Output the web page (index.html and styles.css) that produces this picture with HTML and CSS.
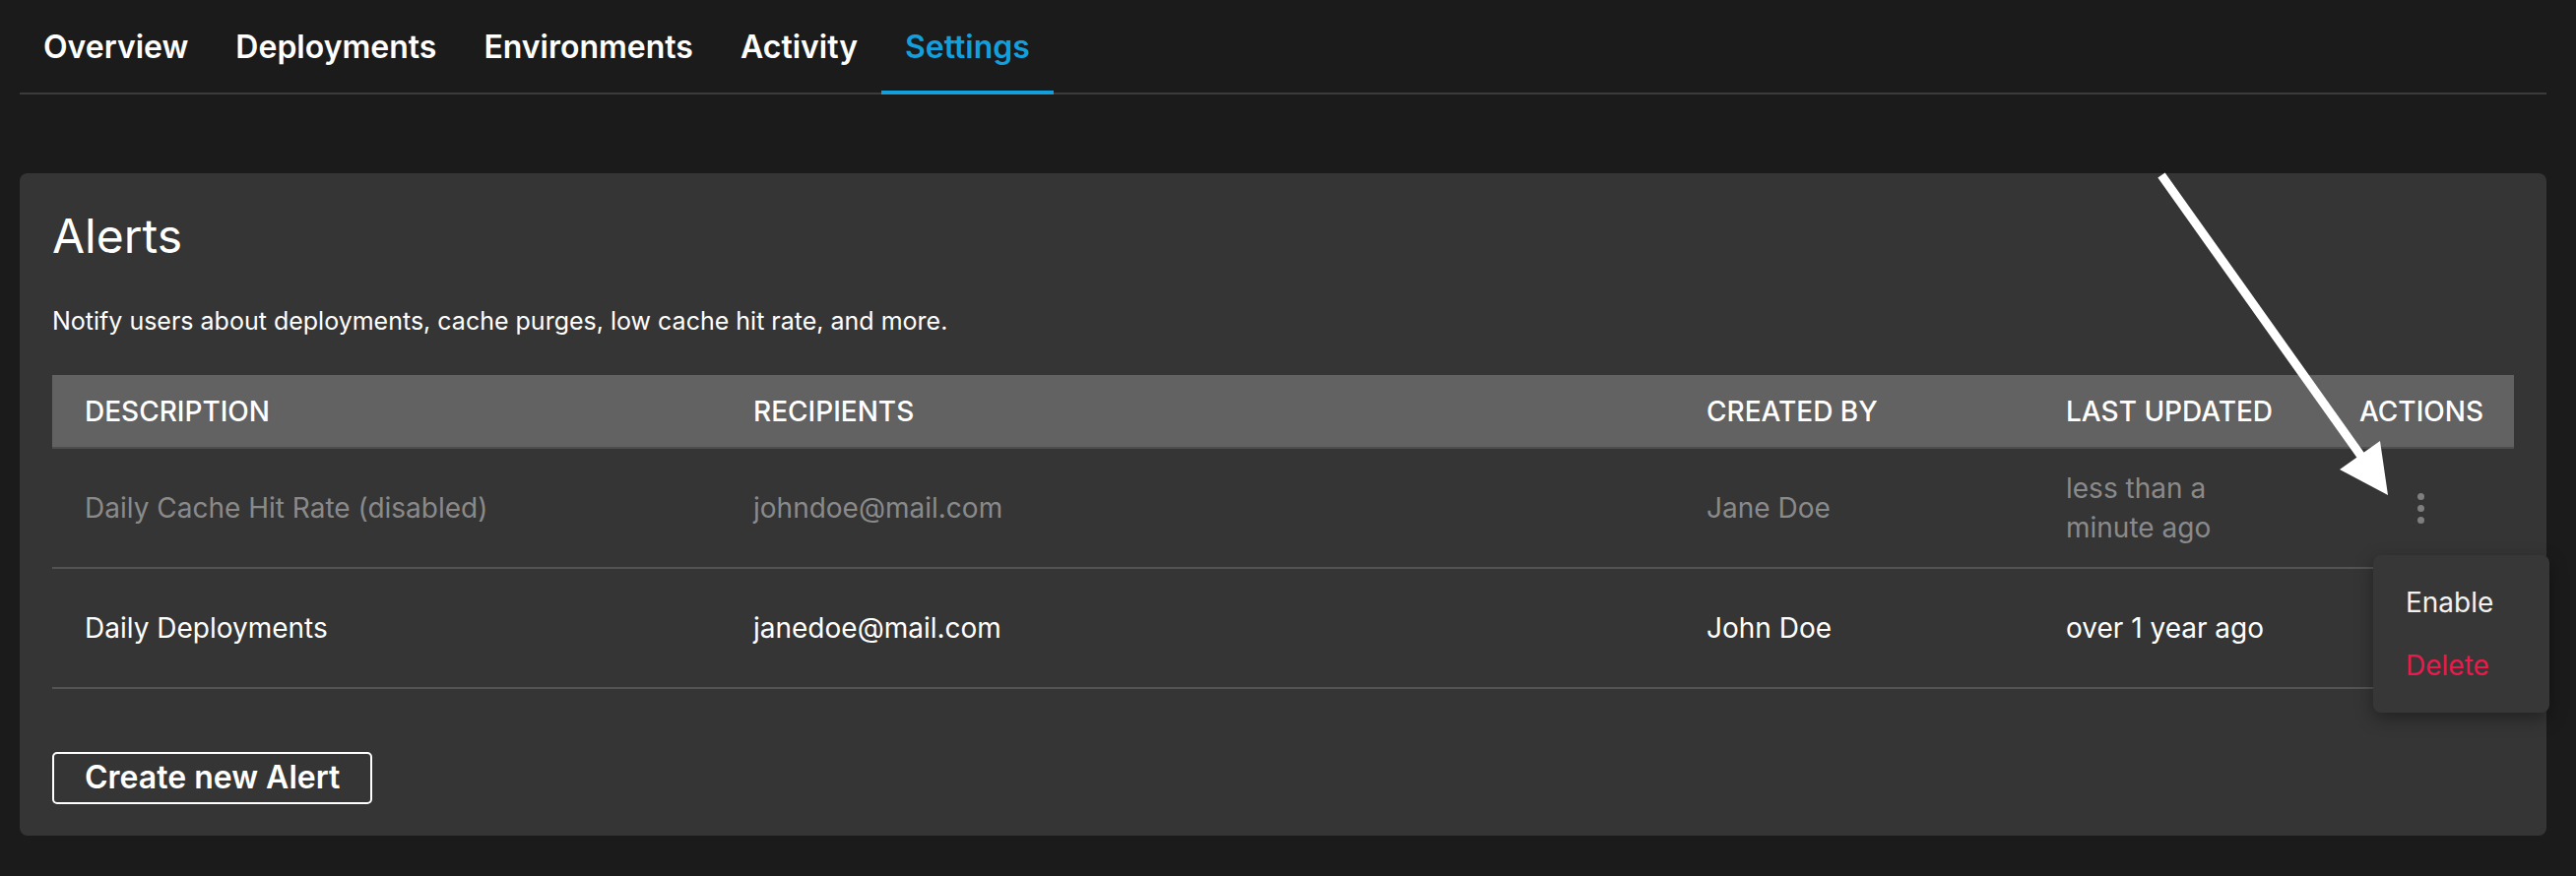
FILE: index.html
```html
<!DOCTYPE html>
<html lang="en">
<head>
<meta charset="utf-8">
<title>Settings – Alerts</title>
<link rel="stylesheet" href="styles.css">
</head>
<body>
<div class="page">
  <nav class="tabs">
    <a class="tab">Overview</a>
    <a class="tab">Deployments</a>
    <a class="tab">Environments</a>
    <a class="tab">Activity</a>
    <a class="tab active">Settings</a>
  </nav>

  <section class="card">
    <h1 class="title">Alerts</h1>
    <p class="desc">Notify users about deployments, cache purges, low cache hit rate, and more.</p>

    <div class="table">
      <div class="row head">
        <div class="cell">DESCRIPTION</div>
        <div class="cell">RECIPIENTS</div>
        <div class="cell">CREATED BY</div>
        <div class="cell">LAST UPDATED</div>
        <div class="cell">ACTIONS</div>
      </div>
      <div class="row disabled">
        <div class="cell">Daily Cache Hit Rate (disabled)</div>
        <div class="cell">johndoe@mail.com</div>
        <div class="cell">Jane Doe</div>
        <div class="cell">less than a minute ago</div>
        <div class="cell actions">
          <button class="kebab" aria-label="Actions"><span></span><span></span><span></span></button>
          <div class="menu">
            <div class="menu-item">Enable</div>
            <div class="menu-item danger">Delete</div>
          </div>
        </div>
      </div>
      <div class="row">
        <div class="cell">Daily Deployments</div>
        <div class="cell">janedoe@mail.com</div>
        <div class="cell">John Doe</div>
        <div class="cell">over 1 year ago</div>
        <div class="cell actions"></div>
      </div>
    </div>

    <button class="create">Create new Alert</button>
  </section>
</div>

<svg class="annotation" width="2616" height="890" viewBox="0 0 2616 890" aria-hidden="true">
  <line x1="2195" y1="178" x2="2399" y2="465" stroke="#ffffff" stroke-width="9"/>
  <polygon points="2425,503 2376,477 2417,448" fill="#ffffff"/>
</svg>
</body>
</html>
```

FILE: styles.css
```css
* {
  box-sizing: border-box;
}

html, body {
  margin: 0;
  padding: 0;
  background: #1b1b1b;
}

body {
  font-family: Inter, "Noto Sans", "Liberation Sans", sans-serif;
  color: #ffffff;
  width: 2616px;
  height: 890px;
  overflow: hidden;
  position: relative;
}

.page {
  padding: 0 30px 0 20px;
}

/* Tabs */
.tabs {
  display: flex;
  border-bottom: 2px solid #3b3b3b;
}

.tab {
  display: block;
  padding: 28px 24px 24px;
  font-size: 32px;
  line-height: 40px;
  font-weight: 600;
  color: #ffffff;
  border-bottom: 4px solid transparent;
  margin-bottom: -2px;
}

.tab.active {
  color: #139fdc;
  border-bottom-color: #139fdc;
}

/* Card */
.card {
  margin-top: 80px;
  background: #353535;
  border-radius: 8px;
  padding: 36px 33px 32px;
}

.title {
  margin: 0;
  font-size: 48px;
  line-height: 56px;
  font-weight: 400;
}

.desc {
  margin: 40px 0 37px;
  font-size: 25px;
  line-height: 36px;
}

/* Table */
.table {
  display: flex;
  flex-direction: column;
}

.row {
  display: grid;
  grid-template-columns: 679px 968px 365px 298px 190px;
  min-height: 122px;
  border-bottom: 2px solid #535353;
  font-size: 28px;
  line-height: 40px;
}

.row.head {
  min-height: 0;
  background: #626262;
  border-bottom-color: #4d4d4d;
  font-weight: 500;
}

.cell {
  display: flex;
  align-items: center;
  padding: 0 33px;
}

.row.head .cell {
  padding: 17px 33px 16px;
}

.row.disabled {
  color: #8a8a8a;
}

.cell.actions {
  position: relative;
  justify-content: center;
}

.kebab {
  display: flex;
  flex-direction: column;
  gap: 5px;
  padding: 0;
  margin: 0;
  border: 0;
  background: none;
}

.kebab span {
  display: block;
  width: 7px;
  height: 7px;
  border-radius: 50%;
  background: #7e7e7e;
}

.menu {
  position: absolute;
  top: 108px;
  left: 47px;
  width: 179px;
  padding: 16px 0;
  background: #373737;
  border-radius: 8px;
  box-shadow: 0 6px 18px rgba(0, 0, 0, 0.35);
  z-index: 10;
}

.menu-item {
  padding: 0 33px;
  font-size: 28px;
  line-height: 64px;
  color: #f2f2f2;
}

.menu-item.danger {
  color: #ea1a4c;
}

/* Button */
.create {
  display: block;
  margin-top: 64px;
  padding: 4px 31px 5px;
  font-family: inherit;
  font-size: 32px;
  line-height: 40px;
  font-weight: 600;
  color: #ffffff;
  background: transparent;
  border: 2px solid #ffffff;
  border-radius: 5px;
}

/* Annotation overlay */
.annotation {
  position: absolute;
  top: 0;
  left: 0;
  pointer-events: none;
}
```
